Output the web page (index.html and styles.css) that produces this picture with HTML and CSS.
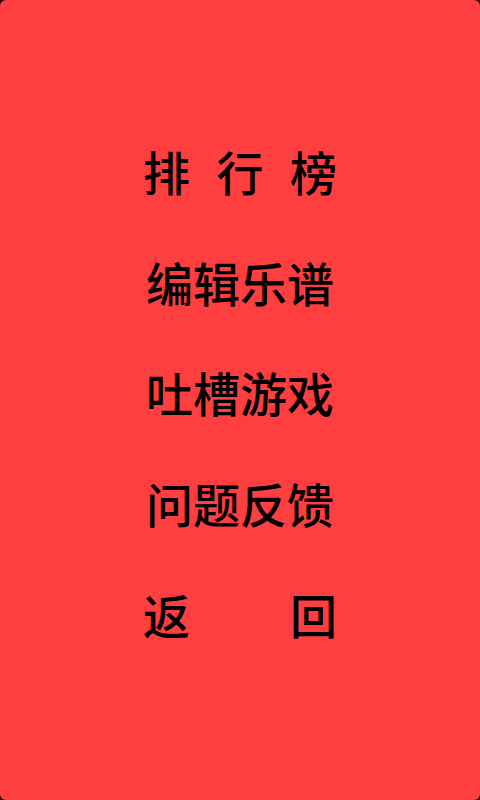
FILE: index.html
```html
<!DOCTYPE html>
<html lang="zh-CN">
<head>
<meta charset="utf-8">
<link rel="stylesheet" href="styles.css">
</head>
<body>
<div class="screen">
  <ul class="menu">
    <li class="item spread"><span>排</span><span>行</span><span>榜</span></li>
    <li class="item">编辑乐谱</li>
    <li class="item">吐槽游戏</li>
    <li class="item">问题反馈</li>
    <li class="item spread"><span>返</span><span>回</span></li>
  </ul>
</div>
</body>
</html>
```
FILE: styles.css
```css
html, body {
  margin: 0;
  padding: 0;
  background: #1a0505;
}
.screen {
  width: 480px;
  height: 800px;
  background: #ff3f3f;
  border-radius: 6px;
  overflow: hidden;
  font-family: "Noto Sans CJK SC", "DejaVu Sans", sans-serif;
  color: #000;
}
.menu {
  list-style: none;
  margin: 0;
  padding: 116px 0 0 0;
  display: flex;
  flex-direction: column;
  align-items: center;
}
.item {
  height: 110.7px;
  line-height: 110.7px;
  font-size: 47px;
  font-weight: 500;
  width: 194px;
  text-align: center;
  white-space: nowrap;
}
.spread {
  display: flex;
  justify-content: space-between;
}
```
